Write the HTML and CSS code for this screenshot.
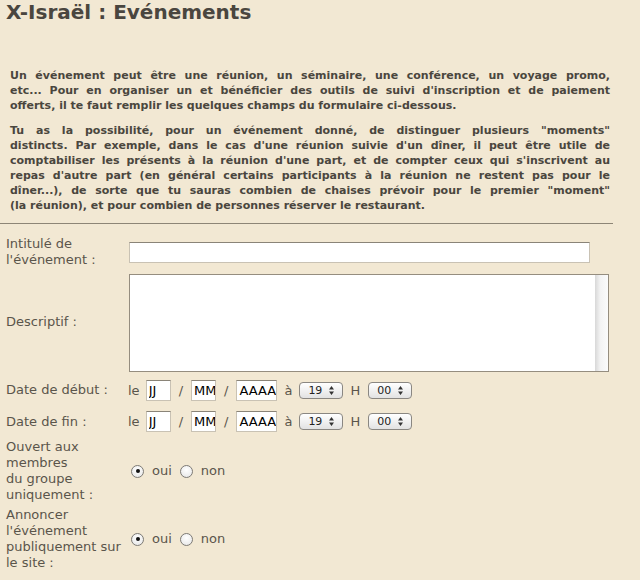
FILE: index.html
```html
<!DOCTYPE html>
<html lang="fr">
<head>
<meta charset="utf-8">
<title>X-Israël : Evénements</title>
<link rel="stylesheet" href="styles.css">
</head>
<body>
<h1 class="title">X-Israël : Evénements</h1>

<div class="intro">
  <p class="para">
    <span class="ln">Un événement peut être une réunion, un séminaire, une conférence, un voyage promo,</span>
    <span class="ln">etc... Pour en organiser un et bénéficier des outils de suivi d'inscription et de paiement</span>
    <span class="ln last">offerts, il te faut remplir les quelques champs du formulaire ci-dessous.</span>
  </p>
  <p class="para">
    <span class="ln">Tu as la possibilité, pour un événement donné, de distinguer plusieurs "moments"</span>
    <span class="ln">distincts. Par exemple, dans le cas d'une réunion suivie d'un dîner, il peut être utile de</span>
    <span class="ln">comptabiliser les présents à la réunion d'une part, et de compter ceux qui s'inscrivent au</span>
    <span class="ln">repas d'autre part (en général certains participants à la réunion ne restent pas pour le</span>
    <span class="ln">dîner...), de sorte que tu sauras combien de chaises prévoir pour le premier "moment"</span>
    <span class="ln last">(la réunion), et pour combien de personnes réserver le restaurant.</span>
  </p>
</div>

<hr class="sep">

<form class="form">
  <label class="lbl">Intitulé de l'événement :</label>
  <div class="ctl"><input class="txt wide" type="text"></div>

  <label class="lbl">Descriptif :</label>
  <div class="ctl">
    <div class="area"><textarea class="area-in"></textarea><span class="scroll"></span></div>
  </div>

  <label class="lbl">Date de début :</label>
  <div class="ctl date first">
    <span class="w le">le</span>
    <input class="txt d2" type="text" value="JJ">
    <span class="w sl">/</span>
    <input class="txt d2" type="text" value="MM">
    <span class="w sl">/</span>
    <input class="txt d4" type="text" value="AAAA">
    <span class="w a">à</span>
    <span class="sel">19<svg class="arr" viewBox="0 0 7 11" width="7" height="11"><path d="M3.5 1 L6 4.5 H1 Z M3.5 10 L6 6.5 H1 Z" fill="#333"/></svg></span>
    <span class="w h">H</span>
    <span class="sel">00<svg class="arr" viewBox="0 0 7 11" width="7" height="11"><path d="M3.5 1 L6 4.5 H1 Z M3.5 10 L6 6.5 H1 Z" fill="#333"/></svg></span>
  </div>

  <label class="lbl">Date de fin :</label>
  <div class="ctl date">
    <span class="w le">le</span>
    <input class="txt d2" type="text" value="JJ">
    <span class="w sl">/</span>
    <input class="txt d2" type="text" value="MM">
    <span class="w sl">/</span>
    <input class="txt d4" type="text" value="AAAA">
    <span class="w a">à</span>
    <span class="sel">19<svg class="arr" viewBox="0 0 7 11" width="7" height="11"><path d="M3.5 1 L6 4.5 H1 Z M3.5 10 L6 6.5 H1 Z" fill="#333"/></svg></span>
    <span class="w h">H</span>
    <span class="sel">00<svg class="arr" viewBox="0 0 7 11" width="7" height="11"><path d="M3.5 1 L6 4.5 H1 Z M3.5 10 L6 6.5 H1 Z" fill="#333"/></svg></span>
  </div>

  <label class="lbl">Ouvert aux membres<br>du groupe uniquement :</label>
  <div class="ctl radios">
    <span class="radio on"></span><span class="w">oui</span>
    <span class="radio"></span><span class="w">non</span>
  </div>

  <label class="lbl">Annoncer l'événement publiquement sur le site :</label>
  <div class="ctl radios">
    <span class="radio on"></span><span class="w">oui</span>
    <span class="radio"></span><span class="w">non</span>
  </div>
</form>
</body>
</html>
```

FILE: styles.css
```css
html, body {
  margin: 0;
  padding: 0;
  background: #f2e8d3;
}
body {
  width: 640px;
  height: 580px;
  overflow: hidden;
  font-family: "DejaVu Sans", Verdana, sans-serif;
  color: #58534a;
}
.title {
  margin: 0;
  padding-left: 6px;
  font-size: 20px;
  line-height: 24px;
  font-weight: bold;
  color: #4a463f;
}
.intro {
  padding: 44px 30px 0 10px;
}
.para {
  margin: 0 0 10px;
  font-size: 11px;
  line-height: 15px;
  font-weight: bold;
  color: #4a463e;
}
.ln {
  display: block;
  text-align: justify;
  text-align-last: justify;
  white-space: nowrap;
}
.ln.last {
  text-align-last: left;
}
.sep {
  margin: 8px 27px 0 0;
  border: 0;
  height: 1px;
  background: #8d8576;
}
.form {
  display: grid;
  grid-template-columns: 123px 1fr;
  row-gap: 4px;
  align-items: center;
  padding: 12px 0 0 6px;
}
.lbl {
  font-size: 13px;
  line-height: 16px;
  color: #5a554b;
}
.ctl {
  display: flex;
  align-items: center;
}
.txt {
  box-sizing: border-box;
  height: 21px;
  margin: 0;
  padding: 0 0 0 2px;
  background: #fff;
  border: 1px solid #c9c2b4;
  border-top-color: #8a8478;
  font-family: "DejaVu Sans", Verdana, sans-serif;
  font-size: 13px;
  color: #000;
  outline: none;
}
.wide {
  width: 461px;
}
.area {
  box-sizing: border-box;
  display: flex;
  width: 480px;
  height: 98px;
  margin-top: 2px;
  border: 1px solid #958d7f;
  background: #fff;
}
.area-in {
  flex: 1;
  border: 0;
  margin: 0;
  padding: 0;
  resize: none;
  outline: none;
  background: #fff;
}
.scroll {
  width: 13px;
  background: linear-gradient(to right, #d8d8d8, #f3f3f3 40%, #fbfbfb);
}
.date {
  margin: 3px 0;
}
.date.first {
  margin-top: 4px;
}
.d2 {
  width: 25px;
}
.d4 {
  width: 41px;
}
.w {
  font-size: 13px;
  line-height: 16px;
  color: #5a554b;
}
.date .le {
  margin: 0 6px 0 -1px;
}
.date .sl {
  margin: 0 8px 0 8px;
}
.date .a {
  margin: 0 7px 0 7px;
}
.date .h {
  margin: 0 8px 0 7px;
}
.sel {
  box-sizing: border-box;
  display: inline-flex;
  align-items: center;
  justify-content: space-between;
  width: 44px;
  height: 17px;
  padding: 0 7px 0 8px;
  border: 1px solid #8a8782;
  border-radius: 4px;
  background: linear-gradient(#ffffff, #f1f1f1 50%, #e2e2e2);
  font-size: 11px;
  color: #222;
}
.arr {
  display: block;
}
.radios {
  padding-left: 2px;
}
.radio {
  box-sizing: border-box;
  width: 13px;
  height: 13px;
  border-radius: 50%;
  border: 1px solid #7d7a75;
  background: radial-gradient(circle at 50% 35%, #ffffff, #e4e4e4);
  margin-right: 8px;
  position: relative;
}
.radio.on::after {
  content: "";
  position: absolute;
  left: 3.5px;
  top: 3.5px;
  width: 4px;
  height: 4px;
  border-radius: 50%;
  background: #111;
}
.radios .w {
  margin-right: 8px;
}
```
